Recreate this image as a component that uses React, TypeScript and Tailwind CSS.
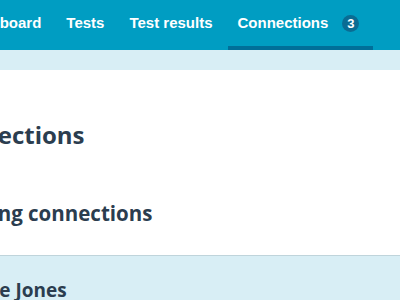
const tabs = [
  { label: "Dashboard" },
  { label: "Tests" },
  { label: "Test results" },
  { label: "Connections", count: 3, active: true },
];

export default function App() {
  return (
    <div className="w-[400px] h-[300px] overflow-hidden bg-white">
      {/* Top nav */}
      <nav className="h-[50px] bg-[#009dc2] overflow-hidden">
        <ul className="flex h-full gap-[5px] -ml-[47px] font-['Liberation_Sans',Arial,sans-serif] font-bold text-[15px] text-white whitespace-nowrap">
          {tabs.map((t) => (
            <li
              key={t.label}
              className={`flex items-center pl-[10px] pt-[1px] border-b-4 ${
                t.active ? "border-[#006f99] pr-[14px]" : "border-transparent pr-[10px]"
              }`}
            >
              {t.label}
              {t.count !== undefined && (
                <span className="ml-[14px] w-[17px] h-[17px] rounded-full bg-[#0a6c93] flex items-center justify-center text-[13px] leading-none">
                  {t.count}
                </span>
              )}
            </li>
          ))}
        </ul>
      </nav>
      <div className="h-[20px] bg-[#d8eef5]" />

      {/* Content */}
      <main className="font-['Open_Sans',sans-serif] font-bold text-[#2b3d4f] whitespace-nowrap">
        <section className="pt-[50px] pb-[29px]">
          <h1 className="text-[24px] leading-[30px] -ml-[64px]">Connections</h1>
          <h2 className="mt-[50px] text-[20.5px] leading-[26px] -ml-[60px]">Pending connections</h2>
        </section>
        <div className="border-t border-[#bfd4db] bg-[#d8eef5] pt-[22px] h-[60px]">
          <h3 className="text-[19px] leading-[24px] -ml-[31px]">Jane Jones</h3>
        </div>
      </main>
    </div>
  );
}
